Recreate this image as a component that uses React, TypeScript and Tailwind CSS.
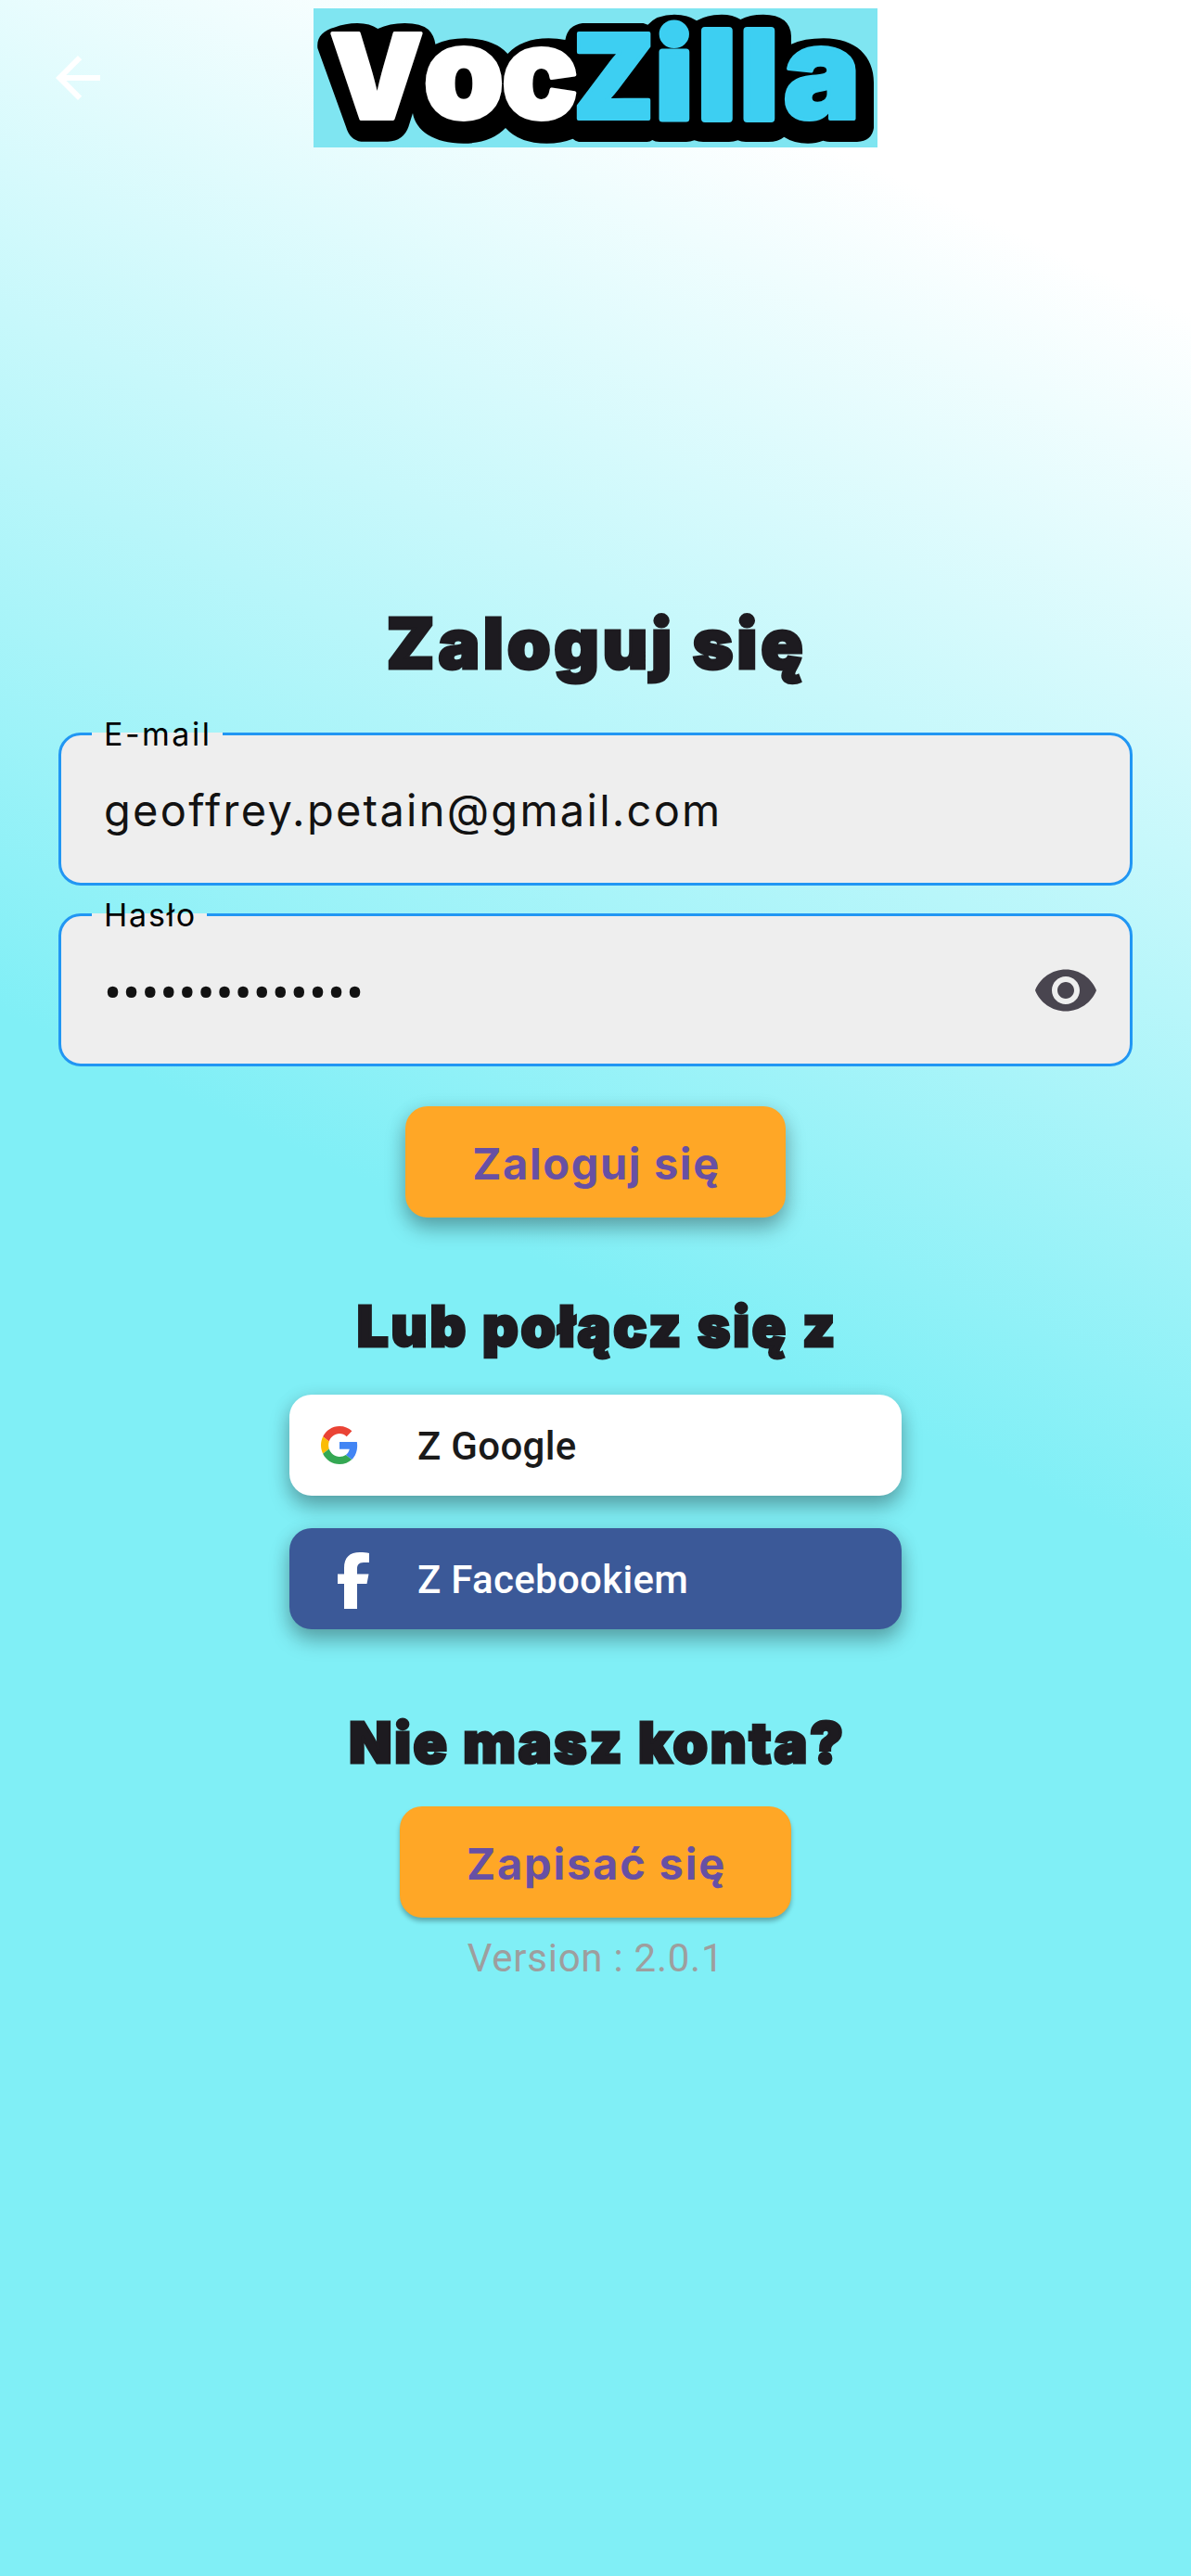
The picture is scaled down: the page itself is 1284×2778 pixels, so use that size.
import type { ReactNode } from "react";
import { MdArrowBack, MdVisibility } from "react-icons/md";

function Logo() {
  return (
    <svg width="608" height="150" viewBox="0 0 608 150" className="overflow-visible bg-[#7fe5f1]" aria-label="VocZilla">
      <path
        fill="#000"
        d="M4.400 43C3 31 10 24 22.800 20.500Q34 16 47.300 16Q61 16 69.300 22Q82 16 98.300 16Q116 16 124 23Q130 29 131.400 38.700Q146 32.300 163.600 32.300Q195 33 209.300 49Q225 32.300 253.400 32.300Q263 32.300 271.400 34Q274 18 290 16H355.500L360.400 17.700Q370 6.700 389 6.700Q404 6.700 413 13.300Q424 6.700 440 6.700Q452 6.700 460.400 12Q470 6.700 485 6.700Q514 7 515 30V38.700Q529 32.300 550 32.300C585 32.300 604 52 604 80V129Q602 143 586 144H560Q553 144 549.300 142.700Q542 145.700 533 145.700Q518 145.700 507.300 138.700Q501 144 490 144H466Q461 144 457.500 142.300Q453 144 448 144H420Q415 144 410.600 142.300Q406 144 402 144H373Q368 144 365.300 142Q363 144 359.600 144H286Q282 143 279.600 140.700Q267 145.700 251.400 145.700Q222 145.700 207 129Q191 145.700 161.600 145.700C130 145.700 110 132 107 113L102.400 127.700Q97 143 80 143.700H51.400Q39 142 35 127.700Z"
      />
      <text
        y="119"
        fontFamily="Inter, sans-serif"
        fontWeight="900"
        textAnchor="middle"
        strokeLinejoin="round"
        strokeWidth="4"
        fill="#fff"
        stroke="#fff"
      >
        <tspan x="68" fontSize="127">V</tspan>
        <tspan x="162" fontSize="139">o</tspan>
        <tspan x="244" fontSize="137">c</tspan>
        <tspan fill="#3dcff2" stroke="#3dcff2">
          <tspan x="323.5" fontSize="127">Z</tspan>
          <tspan x="389" fontSize="131" strokeWidth="7">i</tspan>
          <tspan x="435" fontSize="131" strokeWidth="8">l</tspan>
          <tspan x="480.500" fontSize="131" strokeWidth="8">l</tspan>
          <tspan x="548" fontSize="139">a</tspan>
        </tspan>
      </text>
    </svg>
  );
}

function GoogleIcon() {
  return (
    <svg width="40" height="41" viewBox="0 0 48 48" preserveAspectRatio="none">
      <path fill="#ea4335" d="M24 9.500c3.540 0 6.710 1.220 9.210 3.600l6.850-6.850C35.900 2.380 30.470 0 24 0 14.620 0 6.510 5.380 2.560 13.220l7.980 6.190C12.430 13.720 17.740 9.500 24 9.500z" />
      <path fill="#4285f4" d="M46.980 24.550c0-1.570-.15-3.090-.38-4.550H24v9.020h12.940c-.58 2.960-2.260 5.480-4.780 7.180l7.730 6c4.510-4.180 7.090-10.360 7.090-17.650z" />
      <path fill="#fbbc05" d="M10.530 28.590c-.48-1.450-.76-2.990-.76-4.590s.27-3.140.76-4.590l-7.980-6.190C.92 16.460 0 20.120 0 24c0 3.880.92 7.540 2.560 10.780l7.970-6.190z" />
      <path fill="#34a853" d="M24 48c6.480 0 11.930-2.130 15.890-5.810l-7.730-6c-2.150 1.450-4.920 2.300-8.160 2.300-6.260 0-11.570-4.220-13.470-9.910l-7.980 6.190C6.510 42.620 14.620 48 24 48z" />
    </svg>
  );
}

function Field({ label, labelClass, children }: { label: string; labelClass: string; children: ReactNode }) {
  return (
    <div className="relative flex h-[165px] w-[1158px] items-center justify-between rounded-[24px] border-[3px] border-[#2196f3] bg-[#eeeeee] pr-[33px] pl-[46px] text-[#121212]">
      <span className={`absolute -top-[3px] left-[33px] flex h-[3px] items-center bg-[#eeeeee] pl-[13px] text-[34px] leading-[40px] whitespace-nowrap text-black ${labelClass}`}>
        <span>{label}</span>
      </span>
      {children}
    </div>
  );
}

const heading = "font-black whitespace-nowrap text-[#1d1b20] [-webkit-text-stroke:3px_#1d1b20]";
const orange = "flex h-[120px] items-center justify-center rounded-[24px] bg-[#ffa726] pt-[4px] text-[47px] font-bold text-[#6750a4]";
const raised = "shadow-[0_12px_22px_rgba(0,0,0,0.28),0_3px_20px_rgba(0,0,0,0.1)]";

export default function App() {
  return (
    <div className="h-[2778px] w-[1284px] bg-[linear-gradient(204.807deg,#ffffff_10%,#80eff6_50%)] font-[Inter,sans-serif]">
      <header className="grid h-[168px] grid-cols-[338px_608px_1fr] items-start">
        <MdArrowBack className="mt-[48px] ml-[48px] size-[72px] text-white" />
        <div className="pt-[9px]">
          <Logo />
        </div>
      </header>

      <main className="flex flex-col items-center">
        <h1 className={`mt-[486px] pl-[2px] text-[75px] leading-[80px] tracking-[3.7px] ${heading}`}>Zaloguj się</h1>

        <div className="mt-[56px] flex flex-col gap-[30px]">
          <Field label="E-mail" labelClass="w-[141px] tracking-[2.5px]">
            <span className="pt-[2px] text-[47px] leading-[56px] tracking-[2.25px]">geoffrey.petain@gmail.com</span>
          </Field>
          <Field label="Hasło" labelClass="w-[124px] tracking-[1.8px]">
            <span className="pt-[8px] font-[Roboto,sans-serif] text-[57px] leading-[56px] tracking-[0.85px]">••••••••••••••</span>
            <MdVisibility className="size-[72px] text-[#49454f]" />
          </Field>
        </div>

        <button className={`mt-[43px] w-[410px] pl-[2px] tracking-[1.6px] ${orange} ${raised}`}>Zaloguj się</button>

        <h2 className={`mt-[85px] pl-[4px] text-[60px] leading-[64px] tracking-[2.9px] ${heading}`}>Lub połącz się z</h2>

        <div className="mt-[42px] flex w-[660px] flex-col gap-[35px] font-[Roboto,sans-serif] text-[42px] font-medium tracking-[0.3px]">
          <button className={`flex h-[109px] items-center rounded-[24px] bg-white text-[#1a1a1a] ${raised}`}>
            <span className="flex w-[138px] pl-[34px]">
              <GoogleIcon />
            </span>
            <span className="pt-[2px]">Z Google</span>
          </button>
          <button className={`flex h-[109px] items-center rounded-[24px] bg-[#3b5998] text-white ${raised}`}>
            <span className="flex w-[138px] pt-[3px] pl-[52px]">
              <svg width="34" height="61" viewBox="0 0 34 61" fill="currentColor">
                <path d="M7 61V34H0V23.500H7V17C7 5.500 13 0 24 0C28 0 31 .4 34 .9V11H28C22.500 11 21 14 21 18V23.500H33.500L31.500 34H21V61Z" />
              </svg>
            </span>
            <span className="pt-[2px]">Z Facebookiem</span>
          </button>
        </div>

        <h2 className={`mt-[90px] pl-[4px] text-[60px] leading-[64px] tracking-[2.7px] ${heading}`}>Nie masz konta?</h2>

        <button className={`mt-[37px] w-[422px] pl-[2px] tracking-[1.8px] shadow-[0_4px_5px_rgba(0,0,0,0.28)] ${orange}`}>Zapisać się</button>

        <p className="mt-[20px] font-[Roboto,sans-serif] text-[42px] leading-[48px] tracking-[0.75px] text-[#9e9e9e]">Version : 2.0.1</p>
      </main>
    </div>
  );
}
